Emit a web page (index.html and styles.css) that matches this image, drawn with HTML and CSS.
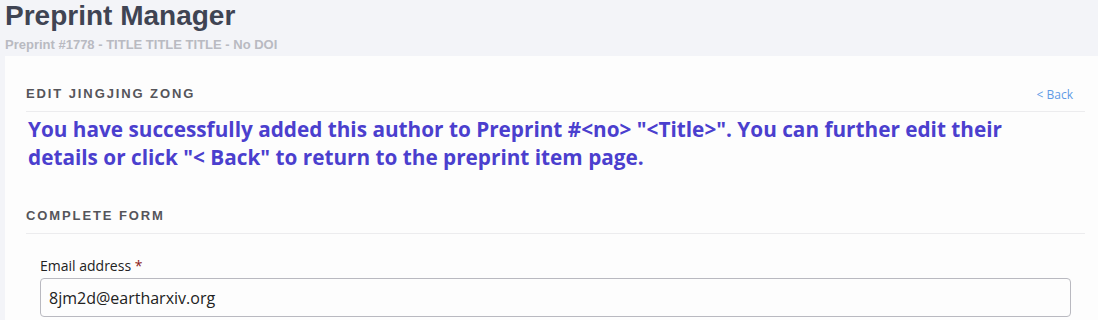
FILE: index.html
```html
<!DOCTYPE html>
<html>
<head>
<meta charset="utf-8">
<link rel="stylesheet" href="styles.css">
</head>
<body>
<header class="page-header">
  <h1 class="page-title">Preprint Manager</h1>
  <div class="page-sub">Preprint #1778 - TITLE TITLE TITLE - No DOI</div>
</header>
<main class="card">
  <div class="section-head">
    <h2 class="section-title">Edit Jingjing Zong</h2>
    <a class="back-link" href="#">&lt; Back</a>
  </div>
  <p class="message">You have successfully added this author to Preprint #&lt;no&gt; "&lt;Title&gt;". You can further edit their details or click "&lt; Back" to return to the preprint item page.</p>
  <div class="section-head form-head">
    <h2 class="section-title">Complete Form</h2>
  </div>
  <div class="field">
    <label class="field-label">Email address <span class="req">*</span></label>
    <input class="field-input" type="text" value="8jm2d@eartharxiv.org">
  </div>
</main>
</body>
</html>
```
FILE: styles.css
```css
html, body {
  margin: 0;
  padding: 0;
  background: #f3f4f8;
  overflow: hidden;
}
.page-header {
  padding: 0 5px;
}
.page-title {
  margin: 0;
  font-family: "Liberation Sans", Arial, sans-serif;
  font-weight: bold;
  font-size: 28px;
  line-height: 32px;
  color: #3f4453;
}
.page-sub {
  font-family: "Liberation Sans", Arial, sans-serif;
  font-weight: bold;
  font-size: 13px;
  line-height: 16px;
  margin-top: 5px;
  color: #b9bac1;
}
.card {
  margin: 3px 0 0 5px;
  background: #fdfdfd;
  padding: 28px 13px 40px 21px;
}
.section-head {
  display: flex;
  justify-content: space-between;
  align-items: center;
  border-bottom: 1px solid #ececee;
  padding-bottom: 7px;
}
.section-title {
  margin: 0;
  font-family: "Liberation Sans", Arial, sans-serif;
  font-weight: bold;
  font-size: 13px;
  line-height: 20px;
  letter-spacing: 1.9px;
  text-transform: uppercase;
  color: #55555a;
}
.back-link {
  margin-right: 12px;
  font-family: "Open Sans", sans-serif;
  font-size: 12px;
  color: #5f9be6;
  text-decoration: none;
}
.message {
  margin: 3px 60px 0 2px;
  font-family: "Open Sans", sans-serif;
  font-weight: bold;
  font-size: 20.75px;
  line-height: 28px;
  color: #4b3fce;
}
.form-head {
  margin-top: 35px;
}
.field {
  padding: 22px 14px 0 14px;
}
.field-label {
  display: block;
  font-family: "Open Sans", sans-serif;
  font-size: 14px;
  line-height: 20px;
  color: #222;
  margin-bottom: 2px;
}
.req {
  color: #8b1a1a;
}
.field-input {
  display: block;
  box-sizing: border-box;
  width: 100%;
  height: 39px;
  padding: 0 8px;
  border: 1px solid #b9b9c0;
  border-radius: 4px;
  background: #fdfdfd;
  font-family: "Open Sans", sans-serif;
  font-size: 16px;
  color: #222;
  outline: none;
}
```
